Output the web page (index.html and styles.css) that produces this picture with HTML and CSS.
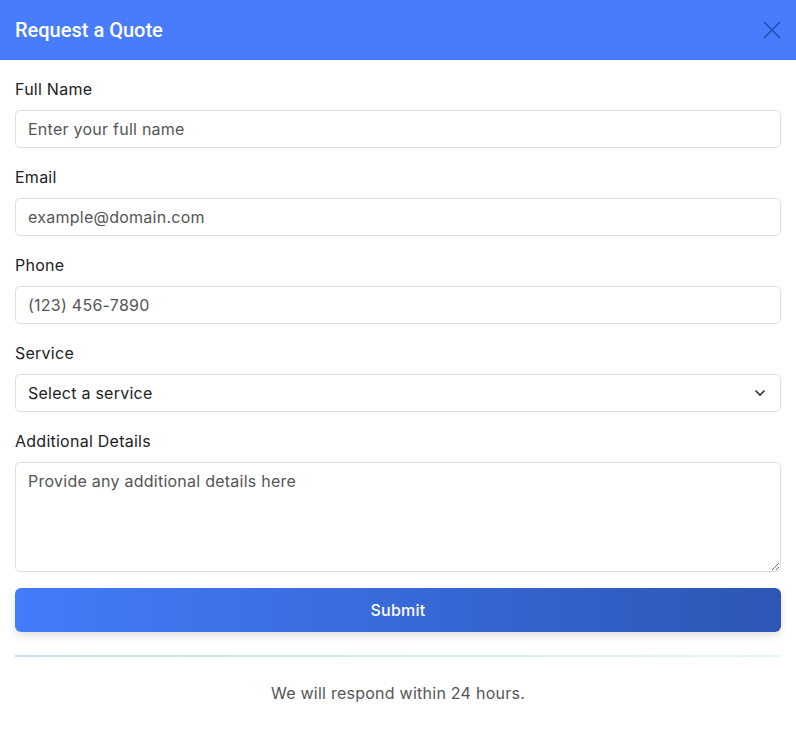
FILE: index.html
```html
<html lang="en">
<head>
    <meta charset="UTF-8">
    <meta name="viewport" content="width=device-width, initial-scale=1.0">
    <title>Request a Quote</title>
    <link rel="stylesheet" href="styles.css">
</head>
<body>
    <div class="modal">
        <div class="modal-header">
            <h2>Request a Quote</h2>
            <span class="close-btn">
                <svg width="18" height="18" viewBox="0 0 18 18"><path d="M1 1 L17 17 M17 1 L1 17" stroke="#1d4fae" stroke-width="1.6" fill="none"/></svg>
            </span>
        </div>
        <form class="quote-form">
            <label for="fullName">Full Name</label>
            <input type="text" id="fullName" placeholder="Enter your full name">
            <label for="email">Email</label>
            <input type="email" id="email" placeholder="example@domain.com">
            <label for="phone">Phone</label>
            <input type="tel" id="phone" placeholder="(123) 456-7890">
            <label for="service">Service</label>
            <div class="select-wrap">
                <select id="service">
                    <option>Select a service</option>
                </select>
                <svg class="chevron" width="12" height="8" viewBox="0 0 12 8"><path d="M1.5 1.5 L6 6 L10.5 1.5" stroke="#333" stroke-width="1.6" fill="none"/></svg>
            </div>
            <label for="details">Additional Details</label>
            <textarea id="details" placeholder="Provide any additional details here"></textarea>
            <button type="button" class="submit-btn">Submit</button>
        </form>
        <div class="divider"></div>
        <p class="note">We will respond within 24 hours.</p>
    </div>
</body>
</html>
```

FILE: styles.css
```css
body
{
    margin: 0;
    background: #fff;
    font-family: "Inter", "Liberation Sans", sans-serif;
    letter-spacing: 0.25px;
}
.modal-header
{
    height: 60px;
    background: #477cfd;
    display: flex;
    align-items: center;
    justify-content: space-between;
    padding: 0 15px;
}
.modal-header h2
{
    margin: 0;
    font-family: Roboto, sans-serif;
    font-weight: 500;
    font-size: 20px;
    letter-spacing: 0;
    color: #fff;
}
.close-btn
{
    display: flex;
    cursor: pointer;
}
.quote-form
{
    display: flex;
    flex-direction: column;
    padding: 17px 15px 0;
}
label
{
    font-size: 16px;
    line-height: 24px;
    color: #222;
    margin-bottom: 10px;
}
input, select, textarea
{
    font-family: inherit;
    font-size: 16px;
    letter-spacing: 0.25px;
    color: #222;
    height: 38px;
    padding: 0 12px;
    margin: -1px 0 17px;
    box-sizing: border-box;
    border: 1px solid #dedede;
    border-radius: 5px;
    background: #fff;
    outline: none;
}
input::placeholder, textarea::placeholder
{
    color: #555;
}
.select-wrap
{
    position: relative;
    display: flex;
    flex-direction: column;
}
select
{
    appearance: none;
    -webkit-appearance: none;
}
.chevron
{
    position: absolute;
    right: 15px;
    top: 14px;
}
textarea
{
    height: 110px;
    padding: 8px 12px;
    line-height: 20px;
    resize: vertical;
    margin-bottom: 16px;
}
.submit-btn
{
    height: 44px;
    border: none;
    border-radius: 6px;
    background: linear-gradient(90deg, #437dfc, #2d56b5);
    color: #fff;
    font-family: inherit;
    font-size: 16px;
    font-weight: 500;
    letter-spacing: 0.25px;
    box-shadow: 0 4px 8px rgba(0, 0, 0, 0.12);
    cursor: pointer;
}
.divider
{
    height: 2px;
    margin: 23px 15px 0;
    background: linear-gradient(90deg, #c6dfe4, #e6f5f7);
}
.note
{
    margin: 26px 0 0;
    text-align: center;
    font-size: 16px;
    color: #555;
}
```
